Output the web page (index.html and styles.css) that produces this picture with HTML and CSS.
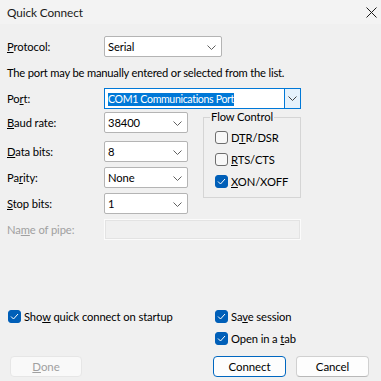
FILE: index.html
```html
<!DOCTYPE html>
<html lang="en">
<head>
  <meta charset="UTF-8">
  <title>Quick Connect</title>
  <link rel="stylesheet" href="styles.css">
</head>
<body>
  <div class="dialog">
    <div class="titlebar">
      <span>Quick Connect</span>
      <svg class="close" width="11" height="11" viewBox="0 0 11 11">
        <path d="M0.5 0.5 L10.5 10.5 M10.5 0.5 L0.5 10.5" stroke="#1a1a1a" stroke-width="1"/>
      </svg>
    </div>

    <div class="content">
      <div class="row first">
        <span class="label"><u>P</u>rotocol:</span>
        <div class="combo protocol">
          <span>Serial</span>
          <svg class="chev" width="9" height="5" viewBox="0 0 9 5"><path d="M0.5 0.5 L4.5 4.5 L8.5 0.5" fill="none" stroke="#606060"/></svg>
        </div>
      </div>

      <p class="hint">The port may be manually entered or selected from the list.</p>

      <div class="row port-row">
        <span class="label">Po<u>r</u>t:</span>
        <div class="combo port">
          <span class="text"><span class="sel">COM1 Communications Port</span></span>
          <span class="drop">
            <svg width="9" height="5" viewBox="0 0 9 5"><path d="M0.5 0.5 L4.5 4.5 L8.5 0.5" fill="none" stroke="#404040"/></svg>
          </span>
        </div>
      </div>

      <div class="mid">
        <div class="fields">
          <div class="row">
            <span class="label"><u>B</u>aud rate:</span>
            <div class="combo small">
              <span>38400</span>
              <svg class="chev" width="9" height="5" viewBox="0 0 9 5"><path d="M0.5 0.5 L4.5 4.5 L8.5 0.5" fill="none" stroke="#606060"/></svg>
            </div>
          </div>
          <div class="row data">
            <span class="label"><u>D</u>ata bits:</span>
            <div class="combo small">
              <span>8</span>
              <svg class="chev" width="9" height="5" viewBox="0 0 9 5"><path d="M0.5 0.5 L4.5 4.5 L8.5 0.5" fill="none" stroke="#606060"/></svg>
            </div>
          </div>
          <div class="row next">
            <span class="label">Pa<u>r</u>ity:</span>
            <div class="combo small">
              <span>None</span>
              <svg class="chev" width="9" height="5" viewBox="0 0 9 5"><path d="M0.5 0.5 L4.5 4.5 L8.5 0.5" fill="none" stroke="#606060"/></svg>
            </div>
          </div>
          <div class="row next">
            <span class="label"><u>S</u>top bits:</span>
            <div class="combo small">
              <span>1</span>
              <svg class="chev" width="9" height="5" viewBox="0 0 9 5"><path d="M0.5 0.5 L4.5 4.5 L8.5 0.5" fill="none" stroke="#606060"/></svg>
            </div>
          </div>
        </div>

        <fieldset class="flow">
          <legend>Flow Control</legend>
          <label class="check"><span class="box"></span><span>D<u>T</u>R/DSR</span></label>
          <label class="check"><span class="box"></span><span><u>R</u>TS/CTS</span></label>
          <label class="check"><span class="box on"><svg width="9" height="7" viewBox="0 0 9 7"><path d="M1 3.5 L3.5 6 L8 1" fill="none" stroke="#fff" stroke-width="1"/></svg></span><span><u>X</u>ON/XOFF</span></label>
        </fieldset>
      </div>

      <div class="row pipe">
        <span class="label disabled">Na<u>m</u>e of pipe:</span>
        <div class="field-off"></div>
      </div>

      <div class="opts">
        <label class="check"><span class="box on"><svg width="9" height="7" viewBox="0 0 9 7"><path d="M1 3.5 L3.5 6 L8 1" fill="none" stroke="#fff" stroke-width="1"/></svg></span><span>Sho<u>w</u> quick connect on startup</span></label>
        <label class="check"><span class="box on"><svg width="9" height="7" viewBox="0 0 9 7"><path d="M1 3.5 L3.5 6 L8 1" fill="none" stroke="#fff" stroke-width="1"/></svg></span><span>Sa<u>v</u>e session</span></label>
        <span></span>
        <label class="check"><span class="box on"><svg width="9" height="7" viewBox="0 0 9 7"><path d="M1 3.5 L3.5 6 L8 1" fill="none" stroke="#fff" stroke-width="1"/></svg></span><span>Open in a <u>t</u>ab</span></label>
      </div>

      <div class="buttons">
        <button class="btn done" disabled><u>D</u>one</button>
        <div class="right">
          <button class="btn default">Connect</button>
          <button class="btn">Cancel</button>
        </div>
      </div>
    </div>
  </div>
</body>
</html>
```

FILE: styles.css
```css
body {
  margin: 0;
  width: 381px;
  height: 381px;
  overflow: hidden;
  background: #f0f0f0;
  font-family: Lato, 'Noto Sans', sans-serif;
  font-size: 11.2px;
  letter-spacing: -0.1px;
  color: #000;
}

u {
  text-decoration-thickness: 1px;
  text-underline-offset: 1px;
}

.titlebar {
  height: 24px;
  background: #f3f3f3;
  display: flex;
  align-items: center;
  justify-content: space-between;
  padding-left: 7px;
  font-size: 11.8px;
  color: #1a1a1a;
}

.close {
  margin-right: 4px;
}

.content {
  padding: 0 7px;
}

.row {
  display: flex;
  align-items: center;
  height: 21px;
}

.row.first {
  margin-top: 12px;
}

.label {
  width: 97px;
}

.label.disabled {
  color: #a0a0a0;
}

.hint {
  margin: 8px 0 0;
  line-height: 16px;
  letter-spacing: -0.2px;
}

.combo {
  box-sizing: border-box;
  height: 21px;
  background: #fff;
  border: 1px solid #b4b4b4;
  border-radius: 2px;
  display: flex;
  align-items: center;
  justify-content: space-between;
  padding: 0 5px 0 3px;
}

.combo.protocol {
  width: 118px;
}

.combo.small {
  width: 84px;
}

.chev {
  margin-top: 1px;
}

.port-row {
  margin-top: 7px;
}

.combo.port {
  width: 197px;
  border-color: #0078d7;
  padding: 0;
  border-radius: 0;
}

.port .text {
  flex: 1;
  padding-left: 3px;
}

.sel {
  background: #0078d7;
  color: #fff;
  font-size: 10.6px;
  letter-spacing: -0.35px;
  line-height: 13px;
  display: inline-block;
}

.port .drop {
  width: 15px;
  height: 100%;
  border-left: 1px solid #0078d7;
  background: #e5f1fb;
  display: flex;
  align-items: center;
  justify-content: center;
}

.mid {
  display: flex;
  margin-top: 3px;
}

.fields {
  width: 196px;
}

.row.data {
  margin-top: 8px;
}

.row.next {
  margin-top: 5px;
}

.flow {
  margin: -3px 0 0;
  width: 98px;
  height: 89px;
  box-sizing: border-box;
  border: 1px solid #d5d5d5;
  padding: 0 0 0 11px;
}

.flow legend {
  padding: 0 1px;
  margin-left: -5px;
  line-height: 16px;
}

.check {
  display: flex;
  align-items: center;
  height: 22px;
}

.box {
  box-sizing: border-box;
  width: 13px;
  height: 13px;
  border: 1px solid #6e6e6e;
  border-radius: 3px;
  background: #f8f8f8;
  margin-right: 3px;
  display: flex;
  align-items: center;
  justify-content: center;
}

.box.on {
  background: #005fb8;
  border-color: #005fb8;
}

.flow .check:first-of-type {
  margin-top: 1px;
}

.pipe {
  margin-top: 5px;
}

.field-off {
  box-sizing: border-box;
  width: 197px;
  height: 21px;
  border: 1px solid #fbfbfb;
  outline: 1px solid #e3e3e3;
  outline-offset: -2px;
}

.opts {
  display: grid;
  grid-template-columns: 207px 1fr;
  margin-top: 65px;
  padding-left: 1px;
}

.buttons {
  display: flex;
  justify-content: space-between;
  margin-top: 7px;
  padding: 0 5px 0 3px;
}

.right {
  display: flex;
  gap: 10px;
}

.btn {
  width: 73px;
  height: 21px;
  font-family: inherit;
  font-size: 11.5px;
  letter-spacing: inherit;
  color: #000;
  background: #fdfdfd;
  border: 1px solid #d0d0d0;
  border-bottom-color: #b8b8b8;
  border-radius: 4px;
  padding: 0;
}

.btn.done {
  width: 72px;
  color: #a0a0a0;
  background: #f9f9f9;
  border-color: #e6e6e6;
}

.btn.default {
  border-color: #0067c0;
}
```
